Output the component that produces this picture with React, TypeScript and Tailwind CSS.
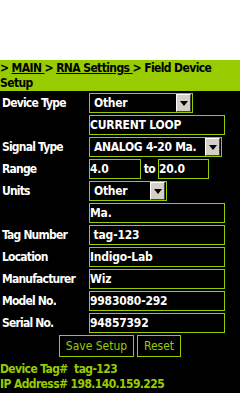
import React from "react";

function Arrow() {
  return (
    <div className="absolute right-[1px] top-[0px] w-[15px] h-[18px] bg-[#d4d0c8] border border-t-white border-l-white border-r-[#404040] border-b-[#404040] flex items-center justify-center">
      <svg width="8" height="5" viewBox="0 0 8 5">
        <polygon points="0,0 8,0 4,5" fill="#000" />
      </svg>
    </div>
  );
}

function Select({ w, value }: { w: string; value: string }) {
  return (
    <div className={`relative h-[20px] border border-[#99cc00] bg-black text-white ${w} pl-[4px] flex items-center leading-none tracking-[-0.3px]`}>
      {value}
      <Arrow />
    </div>
  );
}

function Input({ w, value }: { w: string; value: string }) {
  return (
    <div className={`h-[20px] border border-[#99cc00] bg-black text-white ${w} flex items-center leading-none whitespace-pre tracking-[-0.2px]`}>
      {value}
    </div>
  );
}

function Row({ label, children }: { label: string; children: React.ReactNode }) {
  return (
    <div className="flex items-center h-[20px]">
      <div className="w-[89px] pl-[2px] text-white leading-none tracking-[-0.8px]">{label}</div>
      {children}
    </div>
  );
}

export default function App() {
  return (
    <div className="w-[240px] h-[417px] bg-white font-['DejaVu_Sans_Condensed','DejaVu_Sans',sans-serif] font-bold text-[12px] tracking-[-0.6px]">
      <div className="h-[60px]" />
      <div className="bg-[#99cc00] h-[31px] text-black leading-[15px] pt-[1px]">
        &gt; <span className="underline">MAIN </span>&gt; <span className="underline">RNA Settings </span>&gt; Field Device Setup
      </div>
      <div className="bg-black h-[302px] pt-[2px] flex flex-col gap-[2px]">
        <Row label="Device Type">
          <Select w="w-[104px]" value="Other" />
        </Row>
        <Row label="">
          <Input w="w-[136px]" value="CURRENT LOOP" />
        </Row>
        <Row label="Signal Type">
          <Select w="w-[133px]" value="ANALOG 4-20 Ma." />
        </Row>
        <Row label="Range">
          <Input w="w-[52px]" value="4.0" />
          <span className="text-white w-[17px] text-center leading-none">to</span>
          <Input w="w-[51px]" value="20.0" />
        </Row>
        <Row label="Units">
          <Select w="w-[78px]" value="Other" />
        </Row>
        <Row label="">
          <Input w="w-[136px]" value="Ma." />
        </Row>
        <Row label="Tag Number">
          <Input w="w-[136px]" value=" tag-123" />
        </Row>
        <Row label="Location">
          <Input w="w-[136px]" value="Indigo-Lab" />
        </Row>
        <Row label="Manufacturer">
          <Input w="w-[136px]" value="Wiz" />
        </Row>
        <Row label="Model No.">
          <Input w="w-[136px]" value="9983080-292" />
        </Row>
        <Row label="Serial No.">
          <Input w="w-[136px]" value="94857392" />
        </Row>
        <div className="flex justify-center gap-[3px]">
          <div className="h-[22px] w-[75px] border border-[#99cc00] text-[#99cc00] font-normal tracking-normal flex items-center justify-center leading-none">Save Setup</div>
          <div className="h-[22px] w-[44px] border border-[#99cc00] text-[#99cc00] font-normal tracking-normal flex items-center justify-center leading-none">Reset</div>
        </div>
        <div className="text-[#99cc00] leading-[15px] mt-[3px] whitespace-pre">
          <div>Device Tag#  tag-123</div>
          <div>IP Address# 198.140.159.225</div>
        </div>
      </div>
    </div>
  );
}
